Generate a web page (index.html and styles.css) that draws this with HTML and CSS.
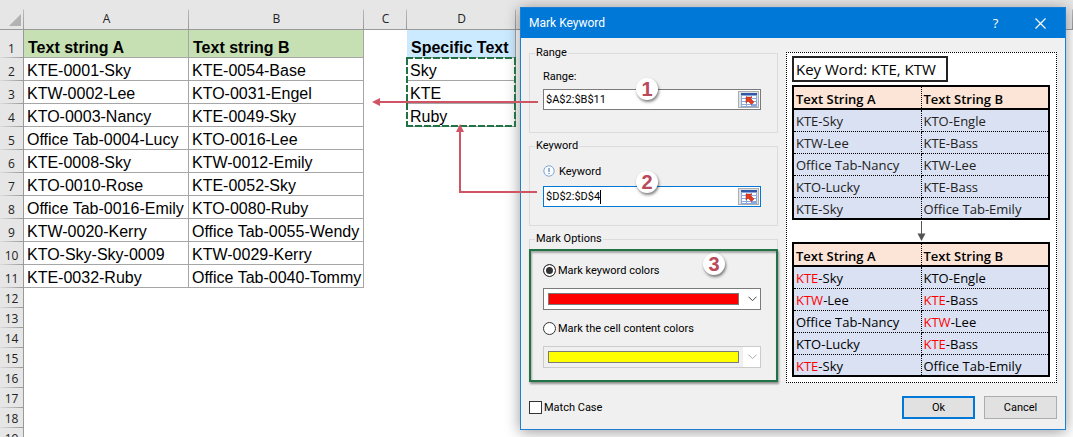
FILE: index.html
```
<!DOCTYPE html>
<html lang="en">
<head>
  <meta charset="UTF-8">
  <title>Mark Keyword</title>
  <link rel="stylesheet" href="styles.css">
</head>
<body>
  <!-- Worksheet -->
  <table class="sheet">
    <colgroup>
      <col class="col-num"><col class="col-a"><col class="col-b"><col class="col-c"><col class="col-d"><col>
    </colgroup>
    <thead>
      <tr>
        <th class="corner"><svg width="12" height="12" viewBox="0 0 12 12"><path d="M12 0V12H0Z" fill="#b2b2b2"/></svg></th>
        <th>A</th><th>B</th><th>C</th><th>D</th><th></th>
      </tr>
    </thead>
    <tbody>
      <tr class="title-row"><th>1</th><td class="cell green">Text string A</td><td class="cell green">Text string B</td><td></td><td class="cell blue">Specific Text</td><td></td></tr>
      <tr><th>2</th><td class="cell">KTE-0001-Sky</td><td class="cell">KTE-0054-Base</td><td></td><td class="cell">Sky</td><td></td></tr>
      <tr><th>3</th><td class="cell">KTW-0002-Lee</td><td class="cell">KTO-0031-Engel</td><td></td><td class="cell">KTE</td><td></td></tr>
      <tr><th>4</th><td class="cell">KTO-0003-Nancy</td><td class="cell">KTE-0049-Sky</td><td></td><td class="cell">Ruby</td><td></td></tr>
      <tr><th>5</th><td class="cell">Office Tab-0004-Lucy</td><td class="cell">KTO-0016-Lee</td><td></td><td></td><td></td></tr>
      <tr><th>6</th><td class="cell">KTE-0008-Sky</td><td class="cell">KTW-0012-Emily</td><td></td><td></td><td></td></tr>
      <tr><th>7</th><td class="cell">KTO-0010-Rose</td><td class="cell">KTE-0052-Sky</td><td></td><td></td><td></td></tr>
      <tr><th>8</th><td class="cell">Office Tab-0016-Emily</td><td class="cell">KTO-0080-Ruby</td><td></td><td></td><td></td></tr>
      <tr><th>9</th><td class="cell">KTW-0020-Kerry</td><td class="cell">Office Tab-0055-Wendy</td><td></td><td></td><td></td></tr>
      <tr><th>10</th><td class="cell">KTO-Sky-Sky-0009</td><td class="cell">KTW-0029-Kerry</td><td></td><td></td><td></td></tr>
      <tr><th>11</th><td class="cell">KTE-0032-Ruby</td><td class="cell">Office Tab-0040-Tommy</td><td></td><td></td><td></td></tr>
      <tr class="empty"><th>12</th><td colspan="5"></td></tr>
      <tr class="empty"><th>13</th><td colspan="5"></td></tr>
      <tr class="empty"><th>14</th><td colspan="5"></td></tr>
      <tr class="empty"><th>15</th><td colspan="5"></td></tr>
      <tr class="empty"><th>16</th><td colspan="5"></td></tr>
      <tr class="empty"><th>17</th><td colspan="5"></td></tr>
      <tr class="empty"><th>18</th><td colspan="5"></td></tr>
      <tr class="empty"><th>19</th><td colspan="5"></td></tr>
    </tbody>
  </table>

  <!-- Dialog -->
  <div class="dialog" role="dialog" aria-labelledby="dialog-title">
    <header class="titlebar">
      <h1 id="dialog-title">Mark Keyword</h1>
      <button class="title-button" aria-label="Help">?</button>
      <button class="title-button" aria-label="Close">
        <svg width="11" height="11" viewBox="0 0 11 11"><path d="M.5 .5L10.500 10.500M10.500 .5L.5 10.500" stroke="#fff" stroke-width="1.200"/></svg>
      </button>
    </header>

    <form class="content">
      <div class="options">
        <fieldset class="group">
          <legend>Range</legend>
          <label class="caption" for="range">Range:</label>
          <div class="ref-box">
            <input type="text" id="range" value="$A$2:$B$11">
            <button type="button" class="picker" aria-label="Select range">
              <svg width="16" height="14" viewBox="0 0 16 14">
                <path fill="#8ba9dc" d="M0 0H16V14H0Z"/>
                <path fill="#2f57a8" d="M0 0H16V2H0Z"/>
                <path fill="#fff" d="M1 3h4v2H1zM6 3h4v2H6zM11 3h4v2h-4zM1 6h4v2H1zM11 6h4v2h-4zM1 9h4v2H1zM6 9h4v2H6zM11 9h4v2h-4zM1 12h4v1H1zM6 12h4v1H6z"/>
                <path fill="#e63a1c" stroke="#a92b18" stroke-width=".5" d="M5 4H11L9.500 5.500L13 9L10.500 11.500L7 8L5 10Z"/>
              </svg>
            </button>
          </div>
          <span class="badge">1</span>
        </fieldset>

        <fieldset class="group">
          <legend>Keyword</legend>
          <label class="caption tall" for="keyword">
            <svg width="12" height="12" viewBox="0 0 12 12"><circle cx="6" cy="6" r="5.200" fill="#f8fbff" stroke="#85a5d3"/><path d="M6 3V7M6 8V9" stroke="#3f68a8"/></svg>
            Keyword
          </label>
          <div class="ref-box active">
            <input type="text" id="keyword" value="$D$2:$D$4">
            <span class="caret"></span>
            <button type="button" class="picker" aria-label="Select keyword range">
              <svg width="16" height="14" viewBox="0 0 16 14">
                <path fill="#8ba9dc" d="M0 0H16V14H0Z"/>
                <path fill="#2f57a8" d="M0 0H16V2H0Z"/>
                <path fill="#fff" d="M1 3h4v2H1zM6 3h4v2H6zM11 3h4v2h-4zM1 6h4v2H1zM11 6h4v2h-4zM1 9h4v2H1zM6 9h4v2H6zM11 9h4v2h-4zM1 12h4v1H1zM6 12h4v1H6z"/>
                <path fill="#e63a1c" stroke="#a92b18" stroke-width=".5" d="M5 4H11L9.500 5.500L13 9L10.500 11.500L7 8L5 10Z"/>
              </svg>
            </button>
          </div>
          <span class="badge">2</span>
        </fieldset>

        <fieldset class="group mark">
          <legend>Mark Options</legend>
          <div class="mark-box">
            <label class="choice"><input type="radio" name="mode" checked>Mark keyword colors</label>
            <div class="combo">
              <select aria-label="Keyword color"><option value="#ff0000"></option></select>
              <span class="swatch red"></span>
              <svg class="chevron" width="9" height="6" viewBox="0 0 9 6"><path d="M.5 .7L4.500 4.700L8.500 .7" fill="none" stroke="#444"/></svg>
            </div>
            <label class="choice"><input type="radio" name="mode">Mark the cell content colors</label>
            <div class="combo disabled">
              <select aria-label="Cell content color" disabled><option value="#ffff00"></option></select>
              <span class="swatch yellow"></span>
              <svg class="chevron" width="9" height="6" viewBox="0 0 9 6"><path d="M.5 .7L4.500 4.700L8.500 .7" fill="none" stroke="#aaa"/></svg>
            </div>
            <span class="badge">3</span>
          </div>
        </fieldset>
      </div>

      <div class="preview">
        <div class="key-word">Key Word: KTE, KTW</div>
        <table class="sample before">
          <tr><th>Text String A</th><th>Text String B</th></tr>
          <tr><td>KTE-Sky</td><td>KTO-Engle</td></tr>
          <tr><td>KTW-Lee</td><td>KTE-Bass</td></tr>
          <tr><td>Office Tab-Nancy</td><td>KTW-Lee</td></tr>
          <tr><td>KTO-Lucky</td><td>KTE-Bass</td></tr>
          <tr><td>KTE-Sky</td><td>Office Tab-Emily</td></tr>
        </table>
        <svg class="down" width="9" height="20" viewBox="0 0 9 20"><path d="M4.500 0V14" stroke="#555"/><path d="M.5 12.500H8.500L4.500 20Z" fill="#555"/></svg>
        <table class="sample">
          <tr><th>Text String A</th><th>Text String B</th></tr>
          <tr><td><mark>KTE</mark>-Sky</td><td>KTO-Engle</td></tr>
          <tr><td><mark>KTW</mark>-Lee</td><td><mark>KTE</mark>-Bass</td></tr>
          <tr><td>Office Tab-Nancy</td><td><mark>KTW</mark>-Lee</td></tr>
          <tr><td>KTO-Lucky</td><td><mark>KTE</mark>-Bass</td></tr>
          <tr><td><mark>KTE</mark>-Sky</td><td>Office Tab-Emily</td></tr>
        </table>
      </div>

      <footer class="footer">
        <label class="choice match"><input type="checkbox">Match Case</label>
        <button type="submit" class="btn primary">Ok</button>
        <button type="button" class="btn">Cancel</button>
      </footer>
    </form>
  </div>

  <!-- Copied range outline and arrows -->
  <svg class="notes" width="560" height="210" viewBox="0 0 560 210" fill="none">
    <path d="M406 58H516M406 126H516M407 58V127M515 58V127" stroke="#217346" stroke-width="2" stroke-dasharray="7 2"/>
    <g stroke="#cf5464" stroke-width="2">
      <path d="M378 102H538"/>
      <path d="M537 192H460V131"/>
    </g>
    <path d="M372 102L380 98V106ZM460 124L456 132H464Z" fill="#cf5464"/>
  </svg>
</body>
</html>
```
FILE: styles.css
```
* {
  box-sizing: border-box;
}

body {
  position: relative;
  margin: 0;
  height: 100vh;
  overflow: hidden;
  background-color: #fff;
  color: #000;
  font-family: Roboto, sans-serif;
  font-size: 11px;
}

/* Worksheet */
.sheet {
  width: 100%;
  table-layout: fixed;
  border-collapse: separate;
  border-spacing: 0;
  font-family: "Liberation Sans", Arial, sans-serif;
  font-size: 16px;
}

.col-num { width: 24px; }
.col-a { width: 165px; }
.col-b { width: 175px; }
.col-c { width: 43px; }
.col-d { width: 109px; }

.sheet th,
.sheet td {
  height: 23px;
  padding: 0;
  line-height: 18px;
  white-space: nowrap;
}

.sheet th {
  background: linear-gradient(to right, #dcdcdc, #999) bottom / 100% 1px no-repeat #e6e6e6;
  border-right: 1px solid #999;
  color: #222;
  font-family: "Open Sans", sans-serif;
  font-size: 12px;
  font-weight: 400;
  vertical-align: bottom;
}

.sheet thead th {
  height: 30px;
  padding-bottom: 1px;
  background: linear-gradient(to bottom, #e6e6e6 9px, #bbb 10px, #999) right / 1px 100% no-repeat #e6e6e6;
  border-right: 0;
  border-bottom: 1px solid #999;
}

.sheet .corner {
  padding: 0 3px 3px 0;
  text-align: right;
}

.corner svg {
  display: block;
  margin-left: auto;
}

.sheet .cell {
  padding: 3px 0 0 3px;
  border-right: 1px solid #a6a6a6;
  border-bottom: 1px solid #a6a6a6;
}

.sheet .title-row th,
.sheet .title-row td {
  height: 28px;
  vertical-align: bottom;
}

.title-row .cell {
  padding-left: 4px;
  font-weight: 700;
}

.green { background-color: #c6e0b4; }
.blue { background-color: #cceaff; }

.sheet .empty th,
.sheet .empty td {
  height: 20px;
}

/* Dialog window */
.dialog {
  position: absolute;
  top: 7px;
  left: 520px;
  right: 7px;
  background-color: #f0f0f0;
  border: 1px solid #1b7fd4;
  box-shadow: 0 2px 14px rgba(0, 0, 0, 0.4);
}

.titlebar {
  display: flex;
  align-items: center;
  height: 30px;
  padding: 0 2px 0 8px;
  background-color: #0078d7;
  color: #fff;
}

.titlebar h1 {
  flex: 1;
  margin: 0;
  font-size: 12px;
  font-weight: 400;
}

.title-button {
  display: flex;
  align-items: center;
  justify-content: center;
  width: 45px;
  height: 30px;
  padding: 0;
  background: none;
  border: none;
  color: #fff;
  font-family: "Open Sans", sans-serif;
  font-size: 13px;
}

.content {
  display: grid;
  grid-template-columns: 249px 1fr;
  column-gap: 8px;
  row-gap: 13px;
  padding: 8px 8px 10px;
}

.options {
  display: flex;
  flex-direction: column;
  gap: 6px;
}

.group {
  position: relative;
  min-width: 0;
  min-height: 87px;
  margin: 0;
  padding: 8px 16px 14px 13px;
  border: 1px solid #dcdcdc;
}

.group legend {
  margin-left: -8px;
  padding: 0 1px;
  line-height: 14px;
}

.caption {
  display: flex;
  align-items: center;
  gap: 4px;
  height: 16px;
  margin-bottom: 5px;
}

.caption.tall {
  height: 20px;
}

.ref-box {
  display: flex;
  align-items: center;
  height: 21px;
  padding-right: 1px;
  background-color: #fff;
  border: 1px solid #7a7a7a;
}

.ref-box.active {
  border-color: #0078d7;
}

.ref-box input {
  flex: 1;
  min-width: 0;
  padding: 0 2px;
  background: none;
  border: none;
  outline: none;
  font-family: Roboto, sans-serif;
  font-size: 11px;
}

.ref-box.active input {
  flex: none;
  field-sizing: content;
  padding-right: 0;
}

.caret {
  width: 1px;
  height: 14px;
  margin-right: auto;
  background-color: #000;
}

.picker {
  display: flex;
  align-items: center;
  justify-content: center;
  width: 21px;
  height: 17px;
  padding: 0;
  background-color: #e1e1e1;
  border: 1px solid #adadad;
}

.badge {
  position: absolute;
  top: 18px;
  left: 106px;
  width: 22px;
  height: 22px;
  border-radius: 50%;
  background-color: #fff;
  box-shadow: 1px 2px 3px rgba(0, 0, 0, 0.5);
  color: #b94a5a;
  font-family: "Liberation Sans", Arial, sans-serif;
  font-size: 20px;
  font-weight: 700;
  line-height: 22px;
  text-align: center;
}

/* Mark options */
.group.mark {
  padding: 3px 0 0;
  border-bottom: 0;
}

.mark legend {
  margin-left: 5px;
}

.mark-box {
  position: relative;
  display: flex;
  flex-direction: column;
  gap: 10px;
  margin: 0 -1px;
  padding: 11px 15px 12px 12px;
  border: 2px solid #217346;
  box-shadow: 1px 2px 2px rgba(0, 0, 0, 0.4), inset 1px 2px 2px rgba(0, 0, 0, 0.3);
}

.mark-box .badge {
  top: 2px;
  left: 172px;
}

.choice {
  display: flex;
  align-items: center;
  gap: 2px;
  height: 16px;
}

.choice input {
  appearance: none;
  width: 13px;
  height: 13px;
  margin: 0;
  background-color: #fff;
  border: 1px solid #333;
}

.choice input[type="radio"] {
  border-radius: 50%;
}

.choice input[type="radio"]:checked {
  background-color: #333;
  box-shadow: inset 0 0 0 2px #fff;
}

.combo {
  display: grid;
  grid-template-columns: 1fr 17px;
  align-items: center;
  height: 22px;
}

.combo select {
  grid-area: 1 / 1 / 2 / 3;
  appearance: none;
  width: 100%;
  height: 22px;
  background-color: #fff;
  border: 1px solid #7a7a7a;
  border-radius: 0;
}

.combo.disabled select {
  background: linear-gradient(#fff, #fff) right / 17px 100% no-repeat #f0f0f0;
  border-color: #ccc;
  opacity: 1;
}

.swatch {
  grid-area: 1 / 1;
  height: 12px;
  margin: 0 5px;
  border: 1px solid #7a7a7a;
  pointer-events: none;
}

.red { background-color: #f00; }
.yellow { background-color: #ff0; }

.chevron {
  grid-area: 1 / 2;
  margin-left: 4px;
  pointer-events: none;
}

/* Preview */
.preview {
  display: flex;
  flex-direction: column;
  margin-top: 6px;
  padding: 3px 6px 5px 5px;
  background-color: #fff;
  border: 1px dotted #000;
  font-family: "Open Sans", sans-serif;
}

.key-word {
  align-self: flex-start;
  width: 156px;
  margin-bottom: 3px;
  padding: 0 2px;
  border: 2px solid #222;
  font-size: 15px;
  line-height: 22px;
}

.sample {
  width: 100%;
  table-layout: fixed;
  border-collapse: collapse;
  border: 2px solid #000;
  background-color: #d9e1f2;
  font-size: 13px;
}

.sample th,
.sample td {
  height: 22px;
  padding: 2px 2px 0;
  border: 1px dotted #000;
  line-height: 18px;
  text-align: left;
  white-space: nowrap;
}

.sample th {
  height: 23px;
  background-color: #fce4d6;
  border-bottom: 2px solid #000;
  font-weight: 600;
}

.before td {
  color: #222;
}

.sample mark {
  background: none;
  color: #f00;
}

.down {
  align-self: center;
  margin: 1px 0;
}

.footer {
  grid-column: 1 / 3;
  display: flex;
  align-items: center;
  gap: 9px;
}

.match {
  margin-right: auto;
}

.btn {
  width: 73px;
  height: 23px;
  padding: 0;
  background-color: #e1e1e1;
  border: 1px solid #adadad;
  font-family: Roboto, sans-serif;
  font-size: 11px;
}

.btn.primary {
  border: 2px solid #0078d7;
}

.notes {
  position: absolute;
  top: 0;
  left: 0;
  pointer-events: none;
}
```
